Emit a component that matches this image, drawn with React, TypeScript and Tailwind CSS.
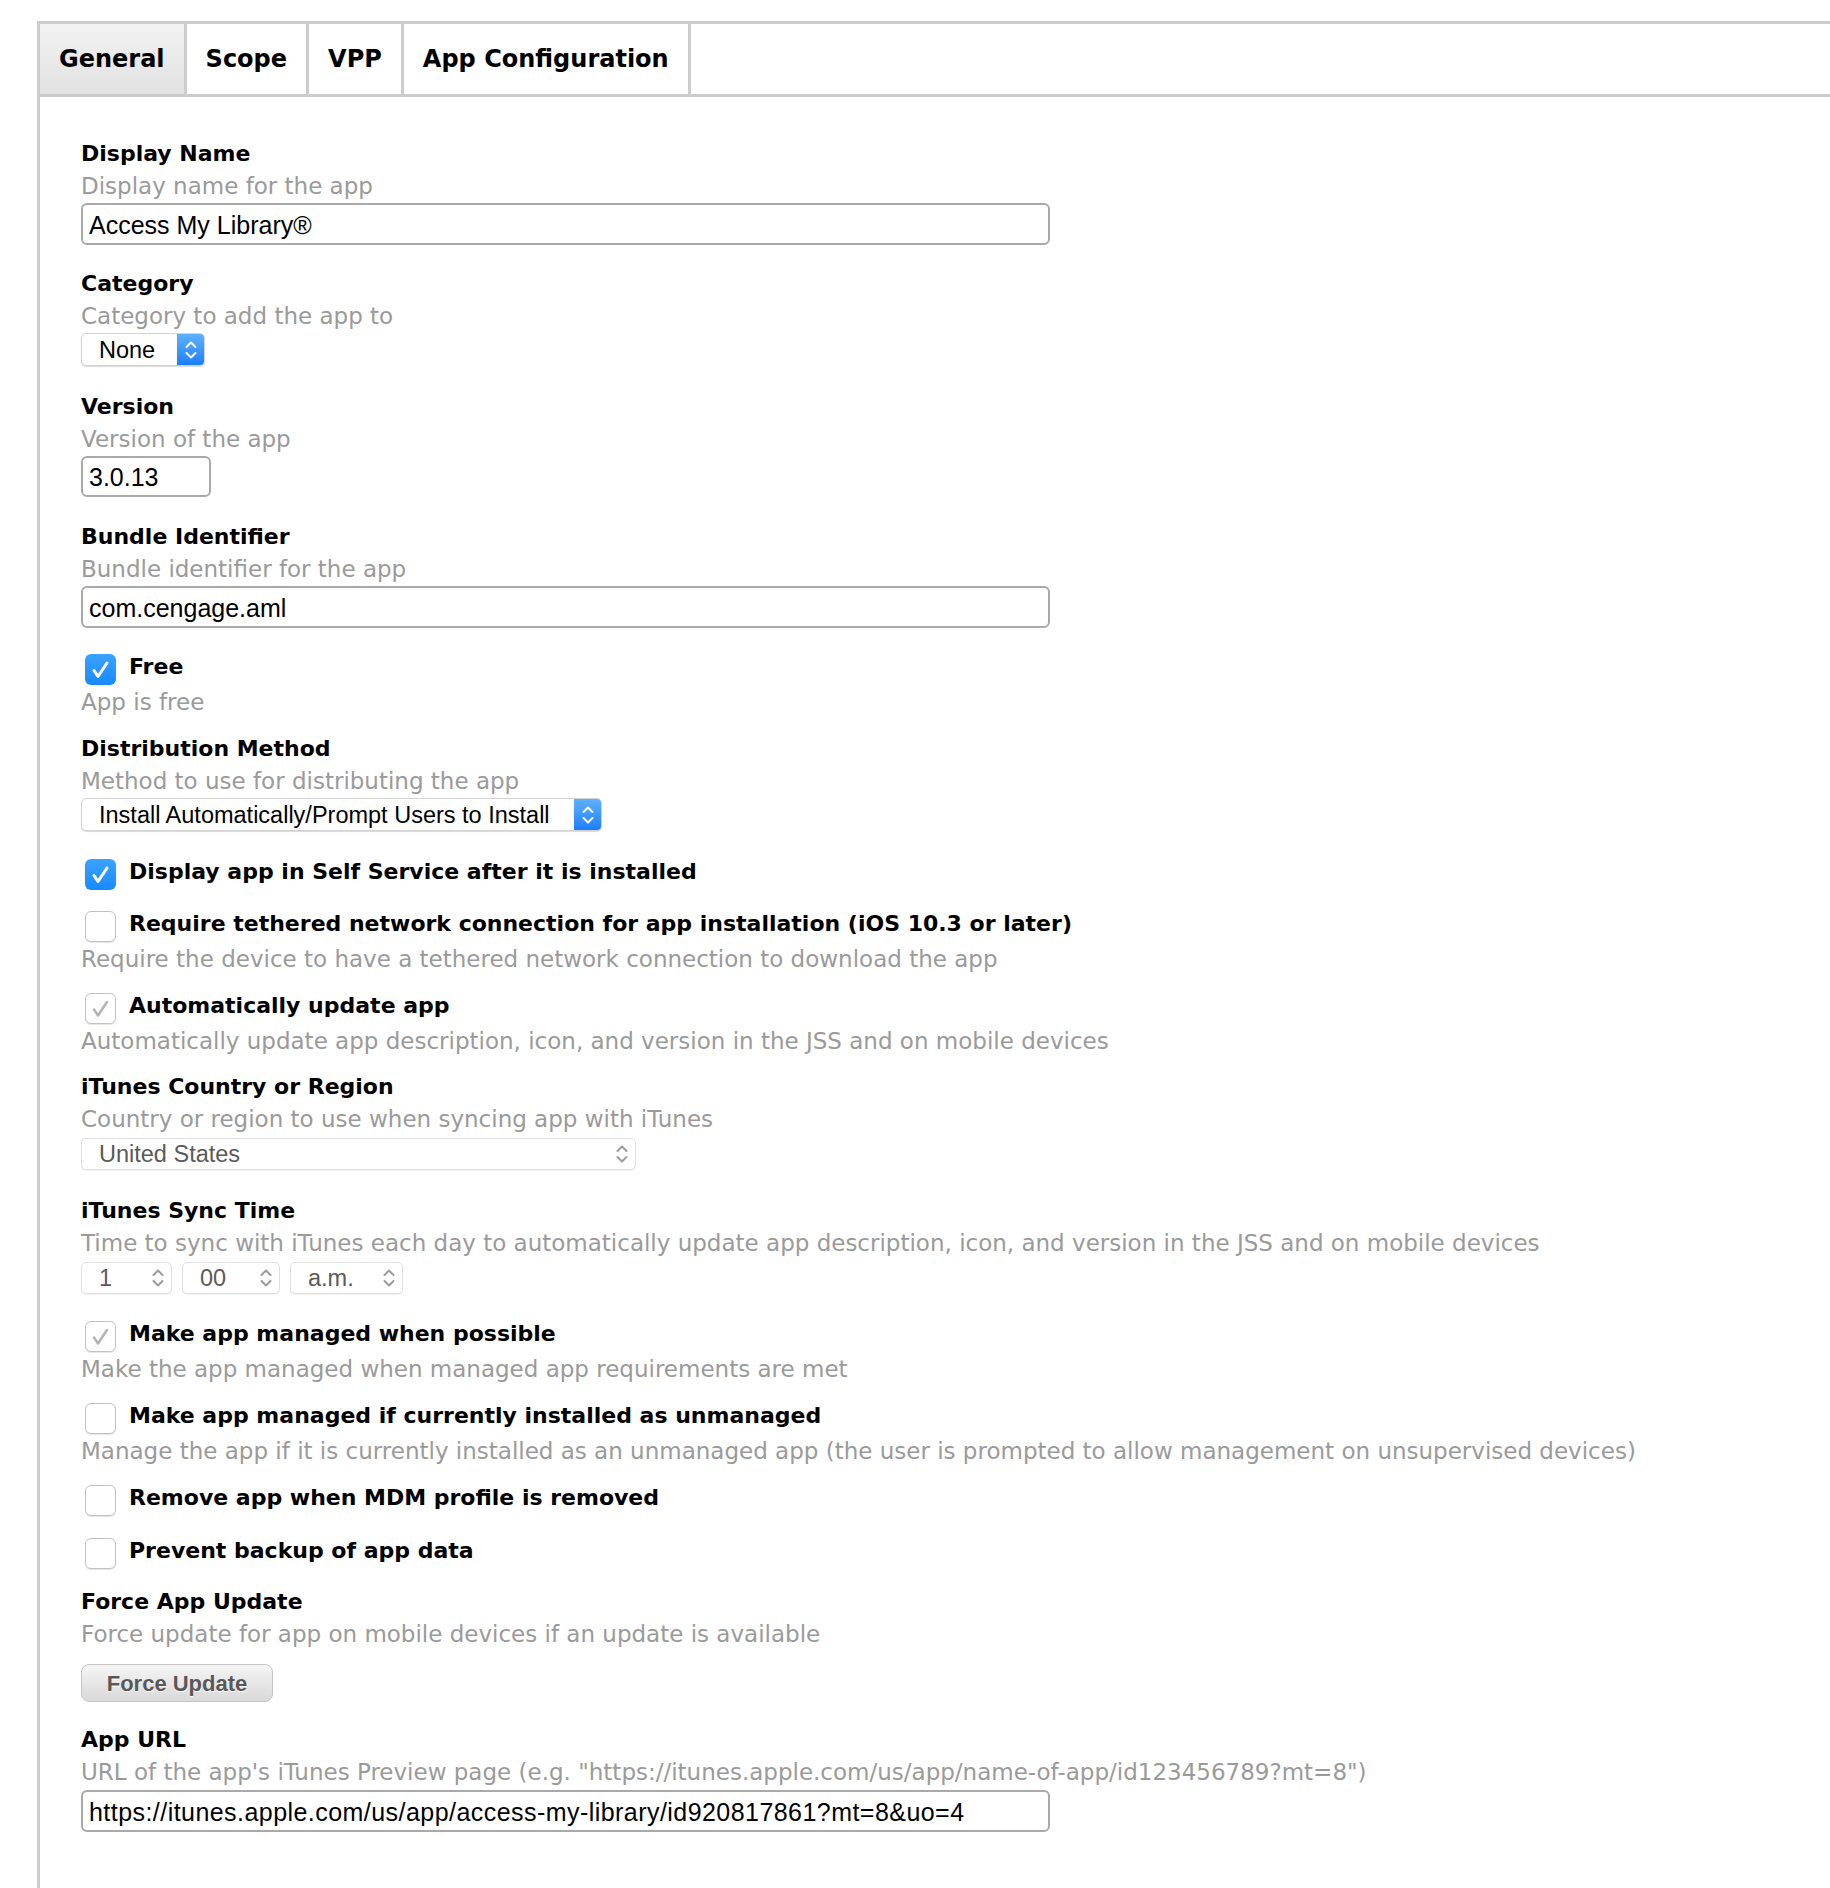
import type { ReactNode } from 'react'

// reusable pieces of the JSS app form
function Label({ children }: { children: ReactNode }) {
  return <div className="text-[22px] leading-[33px] font-bold text-black whitespace-nowrap">{children}</div>
}

function Desc({ children }: { children: ReactNode }) {
  return <div className="text-[23px] leading-[33px] text-[#9a9a9a] whitespace-nowrap">{children}</div>
}

function TextInput({ value, className }: { value: string; className: string }) {
  return (
    <div
      className={`flex items-center border-2 border-[#a9a9a9] rounded-[6px] px-[6px] pt-[3px] bg-white font-['Liberation_Sans',sans-serif] text-[25px] text-black ${className}`}
    >
      {value}
    </div>
  )
}

function Chevrons({ color }: { color: string }) {
  return (
    <svg width="14" height="22" viewBox="0 0 14 22" fill="none" stroke={color} strokeWidth="2" strokeLinecap="round" strokeLinejoin="round">
      <polyline points="2.5,8 7,3.5 11.5,8" />
      <polyline points="2.5,14 7,18.5 11.5,14" />
    </svg>
  )
}

function BlueSelect({ value, className }: { value: string; className: string }) {
  return (
    <div
      className={`flex h-[33px] bg-white rounded-[5px] border border-[#d2d2d2] shadow-[0_1px_1px_rgba(0,0,0,0.15)] overflow-hidden ${className}`}
    >
      <div className="flex-1 flex items-center pl-[17px] pt-[2px] font-['Liberation_Sans',sans-serif] text-[23.5px] text-black">
        {value}
      </div>
      <div className="w-[27px] flex items-center justify-center bg-linear-to-b from-[#5eb0ff] to-[#1a7ffb]">
        <Chevrons color="#ffffff" />
      </div>
    </div>
  )
}

function GraySelect({ value, className }: { value: string; className: string }) {
  return (
    <div
      className={`flex items-center h-[32px] bg-white rounded-[5px] border border-[#e0e0e0] shadow-[0_1px_1px_rgba(0,0,0,0.06)] pl-[17px] pr-[6px] ${className}`}
    >
      <div className="flex-1 pt-[2px] font-['Liberation_Sans',sans-serif] text-[23.5px] text-[#5a5a5a]">{value}</div>
      <Chevrons color="#9b9b9b" />
    </div>
  )
}

type BoxState = 'on' | 'off' | 'disabled'

function CheckBox({ state }: { state: BoxState }) {
  if (state === 'on') {
    return (
      <div className="mt-[4px] ml-[4px] w-[31px] h-[31px] shrink-0 rounded-[6px] bg-linear-to-b from-[#3aa2ff] to-[#168aff] flex items-center justify-center">
        <svg width="31" height="31" viewBox="0 0 31 31" fill="none" stroke="#ffffff" strokeWidth="3" strokeLinecap="round" strokeLinejoin="round">
          <polyline points="9,16.5 13,22.5 22,9" />
        </svg>
      </div>
    )
  }
  return (
    <div className="mt-[4px] ml-[4px] w-[31px] h-[31px] shrink-0 rounded-[6px] bg-white border border-[#c2c2c2] shadow-[0_1px_1px_rgba(0,0,0,0.1)] flex items-center justify-center">
      {state === 'disabled' && (
        <svg width="29" height="29" viewBox="0 0 29 29" fill="none" stroke="#b3b3b3" strokeWidth="2.5" strokeLinecap="round" strokeLinejoin="round">
          <polyline points="8,15.5 12,21.5 21,8" />
        </svg>
      )}
    </div>
  )
}

function CheckRow({ state, children }: { state: BoxState; children: ReactNode }) {
  return (
    <div className="flex items-start h-[36px] gap-[13px]">
      <CheckBox state={state} />
      <Label>{children}</Label>
    </div>
  )
}

const tabs = ['General', 'Scope', 'VPP', 'App Configuration']

export default function App() {
  return (
    <div className="min-h-[1888px] bg-white pt-[21px] pl-[37px] font-['DejaVu_Sans',sans-serif]">
      <div className="min-h-[1867px] border-l-[3px] border-t-[3px] border-[#cccccc]">
        {/* Tabs */}
        <div className="flex h-[73px] border-b-[3px] border-[#cccccc]">
          {tabs.map((t, i) => (
            <div
              key={t}
              className={`flex items-center px-[19px] text-[24px] font-bold text-black border-r-[3px] border-[#cccccc] ${
                i === 0 ? 'bg-linear-to-b from-[#f2f2f2] to-[#e2e2e2]' : 'bg-white'
              }`}
            >
              {t}
            </div>
          ))}
        </div>

        {/* Form */}
        <div className="pl-[41px] pt-[40px] pb-[40px]">
          <div className="mb-[22px]">
            <Label>Display Name</Label>
            <Desc>Display name for the app</Desc>
            <TextInput value="Access My Library®" className="w-[969px] h-[42px]" />
          </div>

          <div className="mb-[24px]">
            <Label>Category</Label>
            <Desc>Category to add the app to</Desc>
            <BlueSelect value="None" className="w-[124px]" />
          </div>

          <div className="mb-[23px]">
            <Label>Version</Label>
            <Desc>Version of the app</Desc>
            <TextInput value="3.0.13" className="w-[130px] h-[41px]" />
          </div>

          <div className="mb-[22px]">
            <Label>Bundle Identifier</Label>
            <Desc>Bundle identifier for the app</Desc>
            <TextInput value="com.cengage.aml" className="w-[969px] h-[42px]" />
          </div>

          <div className="mb-[13px]">
            <CheckRow state="on">Free</CheckRow>
            <Desc>App is free</Desc>
          </div>

          <div className="mb-[24px]">
            <Label>Distribution Method</Label>
            <Desc>Method to use for distributing the app</Desc>
            <BlueSelect value="Install Automatically/Prompt Users to Install" className="w-[521px]" />
          </div>

          <div className="mb-[16px]">
            <CheckRow state="on">Display app in Self Service after it is installed</CheckRow>
          </div>

          <div className="mb-[13px]">
            <CheckRow state="off">Require tethered network connection for app installation (iOS 10.3 or later)</CheckRow>
            <Desc>Require the device to have a tethered network connection to download the app</Desc>
          </div>

          <div className="mb-[12px]">
            <CheckRow state="disabled">Automatically update app</CheckRow>
            <Desc>Automatically update app description, icon, and version in the JSS and on mobile devices</Desc>
          </div>

          <div className="mb-[24px]">
            <Label>iTunes Country or Region</Label>
            <Desc>Country or region to use when syncing app with iTunes</Desc>
            <GraySelect value="United States" className="mt-[2px] w-[555px]" />
          </div>

          <div className="mb-[23px]">
            <Label>iTunes Sync Time</Label>
            <Desc>
              Time to sync with iTunes each day to automatically update app description, icon, and version in the JSS and on mobile devices
            </Desc>
            <div className="flex gap-[10px] mt-[2px]">
              <GraySelect value="1" className="w-[91px]" />
              <GraySelect value="00" className="w-[98px]" />
              <GraySelect value="a.m." className="w-[113px]" />
            </div>
          </div>

          <div className="mb-[13px]">
            <CheckRow state="disabled">Make app managed when possible</CheckRow>
            <Desc>Make the app managed when managed app requirements are met</Desc>
          </div>

          <div className="mb-[13px]">
            <CheckRow state="off">Make app managed if currently installed as unmanaged</CheckRow>
            <Desc>
              Manage the app if it is currently installed as an unmanaged app (the user is prompted to allow management on unsupervised devices)
            </Desc>
          </div>

          <div className="mb-[17px]">
            <CheckRow state="off">Remove app when MDM profile is removed</CheckRow>
          </div>

          <div className="mb-[15px]">
            <CheckRow state="off">Prevent backup of app data</CheckRow>
          </div>

          <div className="mb-[21px]">
            <Label>Force App Update</Label>
            <Desc>Force update for app on mobile devices if an update is available</Desc>
            <button className="mt-[13px] w-[192px] h-[38px] rounded-[8px] border border-[#c6c6c6] bg-linear-to-b from-[#f5f5f5] to-[#d9d9d9] font-['Liberation_Sans',sans-serif] text-[22px] font-bold text-[#585858] [text-shadow:0_1px_0_#ffffff]">
              Force Update
            </button>
          </div>

          <div>
            <Label>App URL</Label>
            <Desc>URL of the app's iTunes Preview page (e.g. "https://itunes.apple.com/us/app/name-of-app/id123456789?mt=8")</Desc>
            <TextInput
              value="https://itunes.apple.com/us/app/access-my-library/id920817861?mt=8&uo=4"
              className="mt-px w-[969px] h-[42px] tracking-[0.45px]"
            />
          </div>
        </div>
      </div>
    </div>
  )
}
